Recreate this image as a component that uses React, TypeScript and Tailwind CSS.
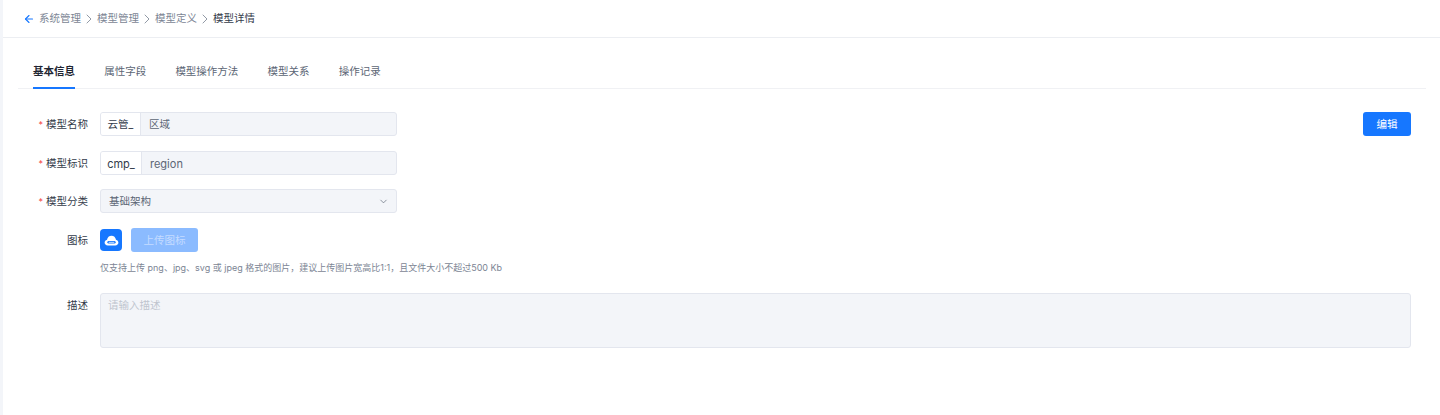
import { ArrowLeft, ChevronDown, ChevronRight } from "lucide-react";

const font = "font-['Inter','Noto_Sans_CJK_SC',sans-serif]";

function Label({ text, required }: { text: string; required?: boolean }) {
  return (
    <div className="flex h-6 w-[85px] shrink-0 items-center justify-end pt-[2px] text-[10.5px] text-[#4e5969]">
      {required && <span className="mr-[3px] text-[9px] text-[#f53f3f]">*</span>}
      <span className="text-[#333b4a]">{text}</span>
    </div>
  );
}

function PrefixInput({ prefix, value, prefixClass, valueClass }: { prefix: string; value: string; prefixClass: string; valueClass: string }) {
  return (
    <div className="flex h-6 w-[297px] overflow-hidden rounded-[3px] border border-[#e3e6ee] bg-[#f3f5f9]">
      <div className={`flex items-center justify-center border-r border-[#e3e6ee] bg-white pt-[2px] text-[#333b4a] ${prefixClass}`}>{prefix}</div>
      <div className={`flex items-center pt-[2px] pl-2 text-[#5c6675] ${valueClass}`}>{value}</div>
    </div>
  );
}

function Sep() {
  return <ChevronRight className="h-4 w-4 text-[#7c8594]" strokeWidth={1.25} />;
}

export default function App() {
  const tabs = ["属性字段", "模型操作方法", "模型关系", "操作记录"];
  return (
    <div className={`flex h-[415px] w-[1440px] overflow-hidden bg-white ${font}`}>
      <div className="w-[3px] shrink-0 bg-[#f3f5f9]" />
      <div className="flex min-w-0 flex-1 flex-col">
        <div className="flex h-[38px] items-center border-b border-[#eceef2] pl-[20px] text-[10.5px] text-[#7c8594]">
          <ArrowLeft className="mr-[4px] h-3 w-3 text-[#1677ff]" strokeWidth={2.25} />
          <span>系统管理</span>
          <Sep />
          <span>模型管理</span>
          <Sep />
          <span>模型定义</span>
          <Sep />
          <span className="text-[#333b4a]">模型详情</span>
        </div>

        <div className="mt-[14px] mr-[14px] ml-[15px] flex h-[37px] gap-[29.2px] border-b border-[#f0f1f4] pl-[15px] text-[10.5px]">
          <div className="flex h-[37px] items-center border-b-2 border-[#1677ff] pt-[5px] font-semibold text-[#1f2633]">基本信息</div>
          {tabs.map((t) => (
            <div key={t} className="flex h-[36px] items-center pt-[3px] text-[#5c6675]">{t}</div>
          ))}
        </div>

        <div className="relative mt-[23px] flex flex-col pr-[29px]">
          <button className="absolute top-0 right-[29px] h-6 w-12 rounded-[3px] bg-[#1677ff] pt-[2px] text-[10.5px] text-white">编辑</button>

          <div className="mb-[15px] flex gap-3">
            <Label text="模型名称" required />
            <PrefixInput prefix="云管_" value="区域" prefixClass="w-10 text-[10.5px]" valueClass="text-[10.5px]" />
          </div>
          <div className="mb-[14px] flex gap-3">
            <Label text="模型标识" required />
            <PrefixInput prefix="cmp_" value="region" prefixClass="w-[41px] text-[11px]" valueClass="text-[11px]" />
          </div>
          <div className="mb-[15px] flex gap-3">
            <Label text="模型分类" required />
            <div className="flex h-6 w-[297px] items-center justify-between rounded-[3px] border border-[#e3e6ee] bg-[#f3f5f9] pr-[7px] pl-2 text-[10.5px] text-[#5c6675]">
              <span className="pt-[2px]">基础架构</span>
              <ChevronDown className="h-[11px] w-[11px] text-[#5c6675]" strokeWidth={1.5} />
            </div>
          </div>

          <div className="flex gap-3">
            <Label text="图标" />
            <div className="flex flex-col">
              <div className="flex items-center gap-[9px]">
                <div className="flex h-[22px] w-[22px] items-center justify-center rounded-[4px] bg-[#1677ff]">
                  <svg viewBox="0 0 16 12" className="h-[11px] w-[15px]">
                    <path d="M4 11.5C1.8 11.5.5 10.2.5 8.300c0-1.600 1-2.800 2.600-3.200C3.500 2.500 5.500.7 8 .7s4.500 1.800 4.900 4.400c1.600.4 2.600 1.600 2.600 3.200 0 1.900-1.300 3.200-3.500 3.200z" fill="#fff" />
                    <rect x="3.500" y="6.600" width="9" height="2.600" rx="1.300" fill="#1677ff" />
                    <rect x="5" y="7.500" width="6" height=".8" fill="#fff" />
                  </svg>
                </div>
                <button className="h-6 w-[67px] rounded-[3px] bg-[#8bbbff] pt-[2px] text-[10.5px] text-[#c5dcff]">上传图标</button>
              </div>
              <div className="mt-[9px] h-[13px] text-[9px] leading-[13px] whitespace-nowrap text-[#7c8594]">
                仅支持上传 png、jpg、svg 或 jpeg 格式的图片，建议上传图片宽高比1:1，且文件大小不超过500 Kb
              </div>
            </div>
          </div>

          <div className="mt-[19px] flex gap-3">
            <div className="h-[24px] w-[85px] shrink-0">
              <Label text="描述" />
            </div>
            <div className="h-[55px] flex-1 rounded-[3px] border border-[#e3e6ee] bg-[#f3f5f9] py-[4px] pr-2 pl-[7px] text-[10.5px] leading-[16px] text-[#c0c5cf]">
              请输入描述
            </div>
          </div>
        </div>
      </div>
    </div>
  );
}
